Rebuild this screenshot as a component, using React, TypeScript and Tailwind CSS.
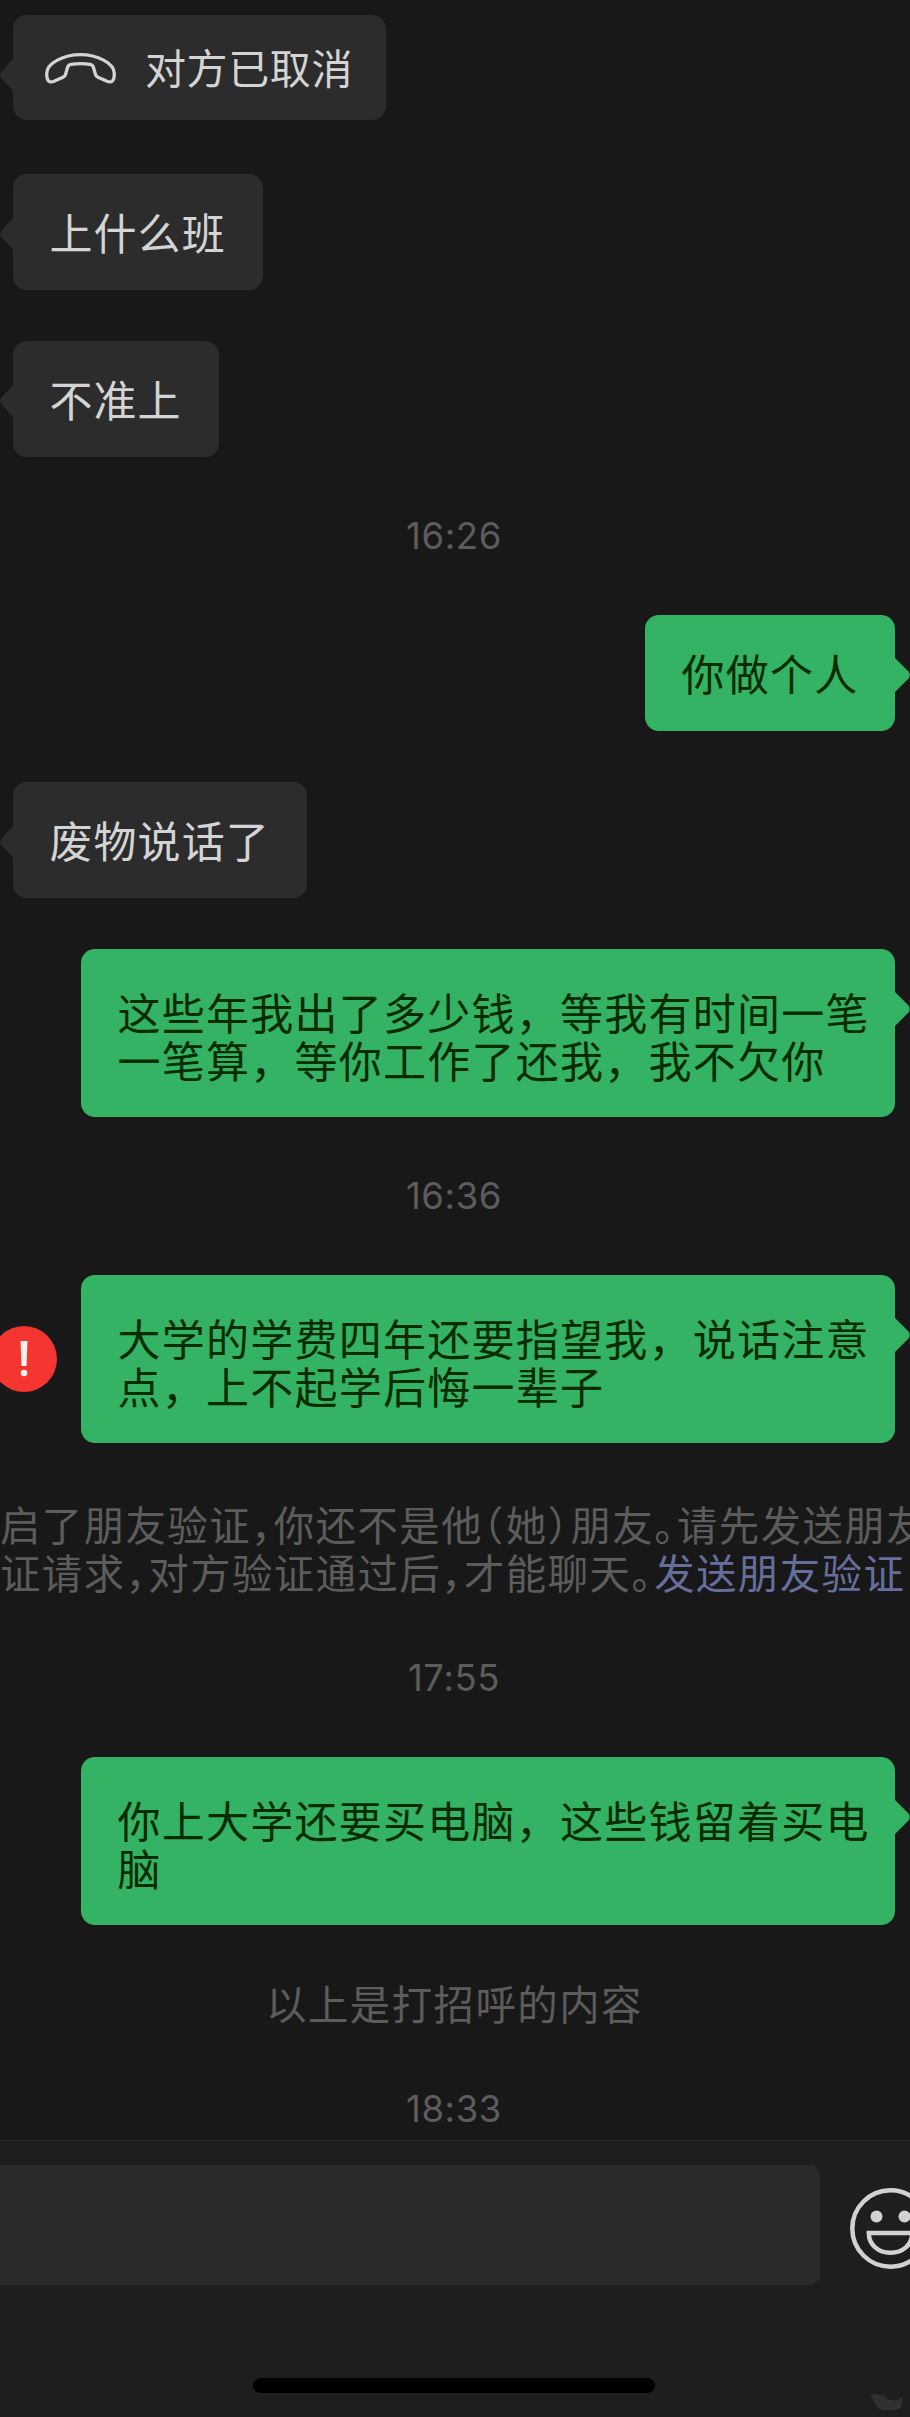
import React from 'react';

const cjk = 'font-["Noto_Sans_CJK_SC",sans-serif]';

function Tail({ side, top }: { side: 'left' | 'right'; top: string }) {
  return side === 'left' ? (
    <svg className={`absolute -left-[14px] ${top}`} width="15" height="34" viewBox="0 0 15 34">
      <path d="M15 0L2.5 13.5Q0 17 2.5 20.500L15 34Z" fill="#2c2c2c" />
    </svg>
  ) : (
    <svg className={`absolute -right-[16px] ${top}`} width="17" height="36" viewBox="0 0 17 36">
      <path d="M0 0L14.500 14.500Q17 18 14.500 21.500L0 36Z" fill="#33b363" />
    </svg>
  );
}

function Received({ children, className }: { children: React.ReactNode; className: string }) {
  return (
    <div className={`relative ml-[13px] flex h-[116px] w-fit items-center rounded-[14px] bg-[#2c2c2c] pb-[2px] pl-[36.500px] pr-[37px] text-[43px] leading-[48px] tracking-[1.050px] text-[#d4d4d4] ${className}`}>
      <Tail side="left" top="top-[43px]" />
      <span className="whitespace-nowrap">{children}</span>
    </div>
  );
}

function Sent({ lines, className }: { lines: string[]; className: string }) {
  return (
    <div className={`relative mr-[15px] flex flex-col justify-center self-end rounded-[14px] bg-[#33b363] pl-[36.500px] text-[43px] leading-[48px] tracking-[1.250px] text-[#062c06] ${className}`}>
      <Tail side="right" top="top-[42px]" />
      {lines.map((line) => (
        <p key={line} className="whitespace-nowrap">{line}</p>
      ))}
    </div>
  );
}

function Time({ value, className }: { value: string; className: string }) {
  return (
    <div className={`flex h-[36px] items-center justify-center pr-[2px] font-[Inter,sans-serif] text-[36.500px] leading-[36px] tracking-[0.600px] text-[#5c5c5c] ${className}`}>
      {value}
    </div>
  );
}

function Mark({ children }: { children: string }) {
  return <span className="tracking-[2.600px]">{children}</span>;
}

function PhoneIcon() {
  return (
    <svg className="ml-[32px] mt-[1px] h-[31px] w-[71px] shrink-0" viewBox="0 0 71 31" fill="none" stroke="#d4d4d4" strokeWidth="3.3" strokeLinejoin="round">
      <path d="M35.500 1.700C19 1.700 1.700 10 1.700 20.500C1.700 27.500 4 30.300 9 28.300L18 24.300Q20 23.400 20.500 21.500L22.500 14.500C23 12.500 24 11.700 26 11.400C32 10.500 39 10.500 45 11.400C47 11.700 48 12.500 48.500 14.500L50.500 21.500Q51 23.400 53 24.300L62 28.300C67 30.300 69.300 27.500 69.300 20.500C69.300 10 52 1.700 35.500 1.700Z" />
    </svg>
  );
}

function SmileIcon() {
  return (
    <svg className="ml-[30px] mt-[7px] h-[81px] w-[81px] shrink-0" viewBox="0 0 81 81" fill="none" stroke="#d2d2d2" strokeWidth="4.500">
      <circle cx="40.500" cy="40.500" r="38.200" />
      <circle cx="26.500" cy="28.500" r="6" fill="#d2d2d2" stroke="none" />
      <circle cx="54.500" cy="28.500" r="6" fill="#d2d2d2" stroke="none" />
      <path d="M18.800 45H62.200C62.200 57 52.500 64.800 40.500 64.800S18.800 57 18.800 45Z" />
    </svg>
  );
}

export default function App() {
  return (
    <div className={`flex h-[2417px] w-[910px] flex-col overflow-hidden bg-[#181818] ${cjk}`}>
      <main className="flex h-[2140px] shrink-0 flex-col pt-[15px]">
        <div className="relative ml-[13px] flex h-[105px] w-[373px] items-center rounded-[14px] bg-[#2c2c2c] text-[41px] leading-[48px] tracking-[0.600px] text-[#d4d4d4]">
          <Tail side="left" top="top-[43px]" />
          <PhoneIcon />
          <span className="mb-[4px] ml-[29px] whitespace-nowrap">对方已取消</span>
        </div>
        <Received className="mt-[54px]">上什么班</Received>
        <Received className="mt-[51px]">不准上</Received>
        <Time value="16:26" className="mt-[61px]" />
        <Sent className="mt-[61px] h-[116px] w-[250px] pb-[2px]" lines={['你做个人']} />
        <Received className="mt-[51px]">废物说话了</Received>
        <Sent className="mt-[51px] h-[168px] w-[814px] pt-[3px]" lines={['这些年我出了多少钱，等我有时间一笔', '一笔算，等你工作了还我，我不欠你']} />
        <Time value="16:36" className="mt-[61px]" />
        <div className="mt-[61px] flex items-center">
          <div className="-ml-[9px] mr-[24px] flex h-[66px] w-[66px] shrink-0 items-center justify-center rounded-full bg-[#f43530]">
            <svg className="h-[36px] w-[8px]" viewBox="0 0 8 36" fill="#fff1ec">
              <path d="M.5 0H7.500L6.500 25H1.500Z" />
              <circle cx="4" cy="32" r="3.300" />
            </svg>
          </div>
          <Sent className="h-[168px] w-[814px] pt-[3px]" lines={['大学的学费四年还要指望我，说话注意', '点，上不起学后悔一辈子']} />
        </div>
        <div className="mb-[3px] mt-[57px] h-[96px] whitespace-nowrap text-[40.400px] leading-[48px] tracking-[1.450px] text-[#5c5c5c] [font-feature-settings:'halt']">
          <p>
            启了朋友验证<Mark>，</Mark>你还不是他<Mark>（</Mark>她<Mark>）</Mark>朋友<Mark>。</Mark>请先发送朋友
          </p>
          <p>
            证请求<Mark>，</Mark>对方验证通过后<Mark>，</Mark>才能聊天<Mark>。</Mark>
            <a className="text-[#646f9c]">发送朋友验证</a>
          </p>
        </div>
        <Time value="17:55" className="mt-[61px]" />
        <Sent className="mt-[61px] h-[168px] w-[814px] pt-[3px]" lines={['你上大学还要买电脑，这些钱留着买电', '脑']} />
        <p className="mt-[54px] h-[48px] pr-[1px] text-center text-[40.400px] leading-[48px] tracking-[1.500px] text-[#5c5c5c]">以上是打招呼的内容</p>
        <Time value="18:33" className="mt-[64px]" />
      </main>
      <footer className="flex h-[277px] shrink-0 flex-col border-t border-[#2b2b2b] bg-[#1e1e1e]">
        <div className="mt-[24px] flex h-[120px] items-center">
          <div className="h-[120px] w-[820px] shrink-0 rounded-r-[10px] bg-[#2a2a2a]" />
          <SmileIcon />
        </div>
        <div className="mt-[93px] flex items-start">
          <div className="ml-[253px] h-[15px] w-[402px] rounded-full bg-black" />
          <svg className="ml-[214px] mt-[15px] h-[18px] w-[34px]" viewBox="0 0 34 18">
            <path d="M1 2C6 0 13 1 18 5C22 8 28 9 33 4C34 10 33 15 28 16C20 17.500 11 17.500 8 14C6 9 4 6 1 2Z" fill="#303030" />
            <path d="M9 14C16 17 26 17 31 12L30 15.500C22 17.500 13 17.500 9 14Z" fill="#393939" />
          </svg>
        </div>
      </footer>
    </div>
  );
}
